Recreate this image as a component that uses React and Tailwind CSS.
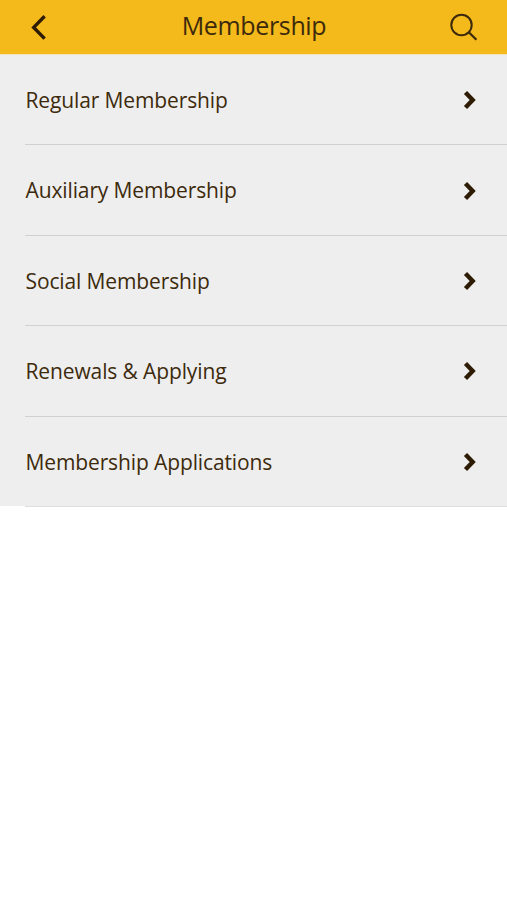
const items = [
  'Regular Membership',
  'Auxiliary Membership',
  'Social Membership',
  'Renewals & Applying',
  'Membership Applications',
];

function BackIcon() {
  return (
    <svg viewBox="0 0 18 26" className="w-[18px] h-[26px]" fill="none" stroke="#2d1b04" strokeWidth="3.4">
      <path d="M14.6 2.2 3.7 13.4l10.9 11.2" />
    </svg>
  );
}

function SearchIcon() {
  return (
    <svg viewBox="0 0 28 28" className="size-7" fill="none" stroke="currentColor" strokeWidth="2">
      <circle cx="11.5" cy="12" r="10.2" />
      <path d="m18.8 19.2 7.6 7.6" strokeWidth="2.3" />
    </svg>
  );
}

function ChevronIcon() {
  return (
    <svg viewBox="0 0 14 20" className="w-3.5 h-5" fill="none" stroke="#2d1b04" strokeWidth="4.4">
      <path d="m2.5 2.5 7.2 7.5-7.2 7.5" />
    </svg>
  );
}

export default function App() {
  return (
    <div className="min-h-screen bg-white font-['Open_Sans',sans-serif] text-[#3d2a0c]">
      <header className="flex h-[55px] items-center justify-between border-b border-[#f0e3bd] bg-[#f4b91a] bg-clip-padding pl-[30px] pr-[29px]">
        <button className="w-7" aria-label="Back"><BackIcon /></button>
        <h1 className="pb-1 text-[25px] leading-[49px] tracking-[-0.35px]">Membership</h1>
        <button aria-label="Search"><SearchIcon /></button>
      </header>
      {/* the last divider hangs just below the grey panel */}
      <ul className="h-[451px] bg-[#eeeeee] pl-[25px]">
        {items.map((item) => (
          <li key={item} className="flex h-[90.4px] items-center justify-between border-b border-[#d0d0d0] pt-[1.2px] pr-[30px] last:border-[#dedede]">
            <span className="pl-[0.5px] pt-[0.8px] text-[21px] tracking-[-0.12px]">{item}</span>
            <ChevronIcon />
          </li>
        ))}
      </ul>
    </div>
  );
}
